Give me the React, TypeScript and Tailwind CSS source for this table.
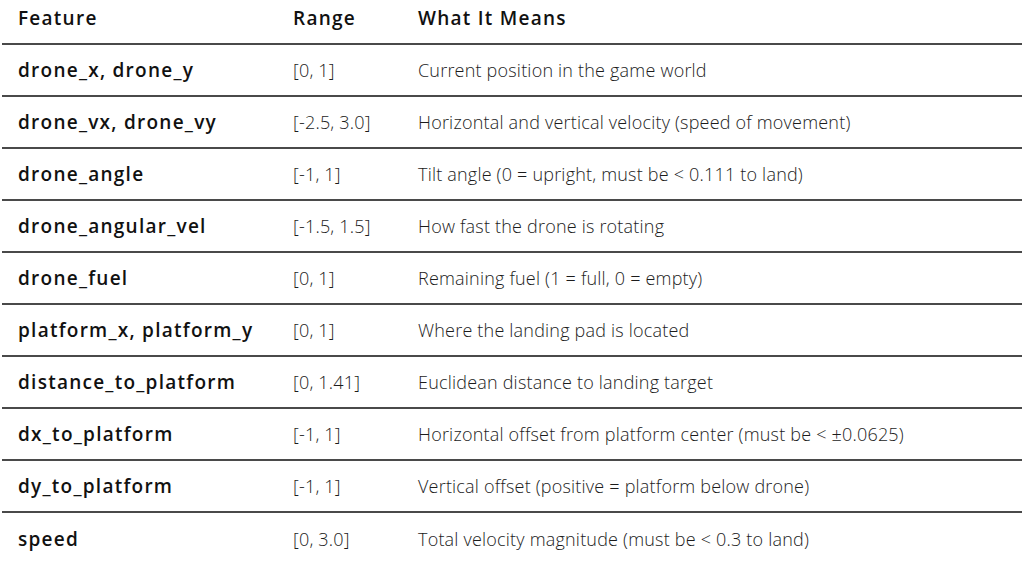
import React from 'react';

const rows = [
  { feature: 'drone_x, drone_y', range: '[0, 1]', meaning: 'Current position in the game world' },
  { feature: 'drone_vx, drone_vy', range: '[-2.5, 3.0]', meaning: 'Horizontal and vertical velocity (speed of movement)' },
  { feature: 'drone_angle', range: '[-1, 1]', meaning: 'Tilt angle (0 = upright, must be < 0.111 to land)' },
  { feature: 'drone_angular_vel', range: '[-1.5, 1.5]', meaning: 'How fast the drone is rotating' },
  { feature: 'drone_fuel', range: '[0, 1]', meaning: 'Remaining fuel (1 = full, 0 = empty)' },
  { feature: 'platform_x, platform_y', range: '[0, 1]', meaning: 'Where the landing pad is located' },
  { feature: 'distance_to_platform', range: '[0, 1.41]', meaning: 'Euclidean distance to landing target' },
  { feature: 'dx_to_platform', range: '[-1, 1]', meaning: 'Horizontal offset from platform center (must be < ±0.0625)' },
  { feature: 'dy_to_platform', range: '[-1, 1]', meaning: 'Vertical offset (positive = platform below drone)' },
  { feature: 'speed', range: '[0, 3.0]', meaning: 'Total velocity magnitude (must be < 0.3 to land)' },
];

const head = 'pl-4 text-[19px] font-semibold tracking-[1.25px] text-[#111]';
const light = 'pl-4 text-[18px] font-light tracking-[0.2px]';

export default function App() {
  return (
    <div className="min-h-screen bg-white px-[2px] font-['Open_Sans',sans-serif] text-[#1c1c1c]">
      {/* header */}
      <div className="grid grid-cols-[275px_125px_1fr] h-[45px] border-b-2 border-[#4a4a4a] pt-[4px]">
        <div className={head}>Feature</div>
        <div className={head}>Range</div>
        <div className={head}>What It Means</div>
      </div>

      {rows.map((r) => (
        <div key={r.feature} className="grid grid-cols-[275px_125px_1fr] h-[52px] items-center border-b-2 border-[#4a4a4a] last:border-b-0">
          <div className={head}>{r.feature}</div>
          <div className={light}>{r.range}</div>
          <div className={light}>{r.meaning}</div>
        </div>
      ))}
    </div>
  );
}
